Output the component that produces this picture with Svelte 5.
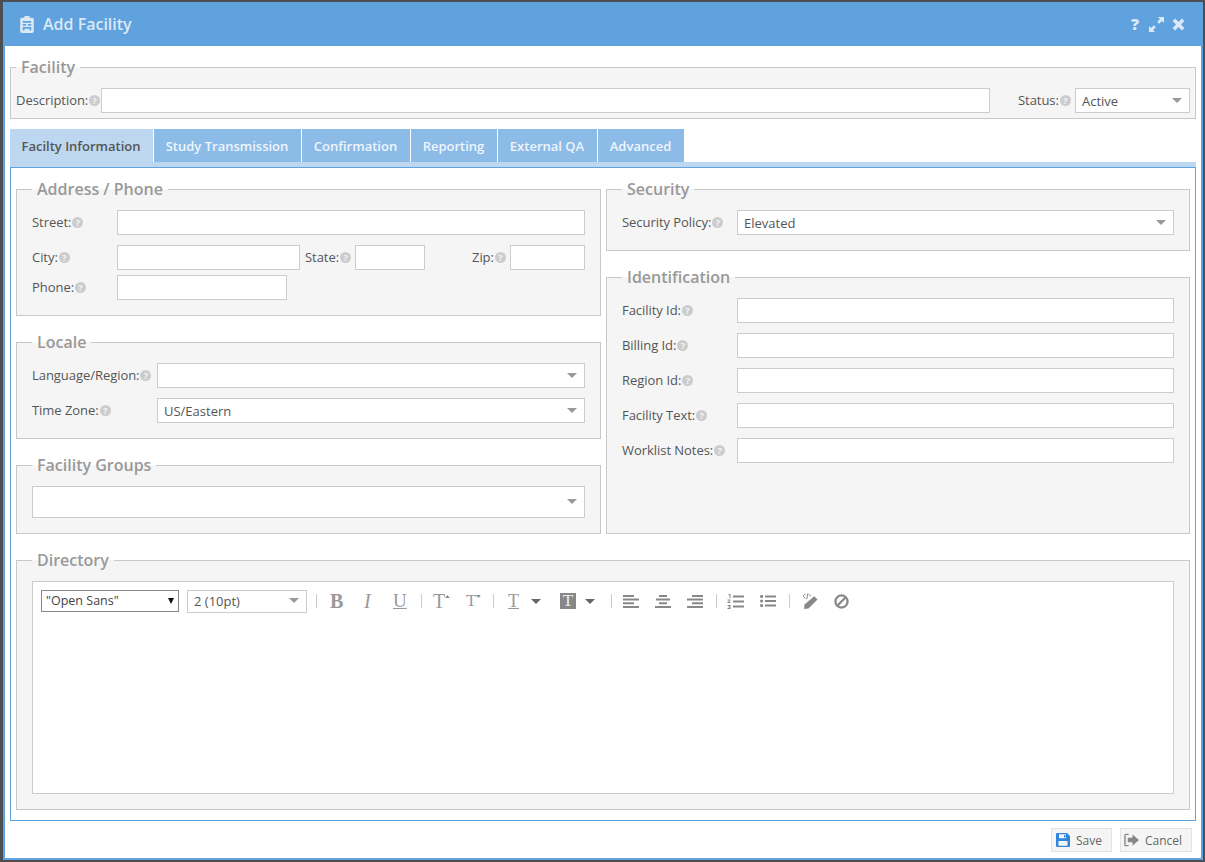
<script>
  const tabs = [
    { name: 'Facilty Information', width: 144 },
    { name: 'Study Transmission', width: 148 },
    { name: 'Confirmation', width: 109 },
    { name: 'Reporting', width: 87 },
    { name: 'External QA', width: 100 },
    { name: 'Advanced', width: 87 }
  ];
  const idFields = ['Facility Id', 'Billing Id', 'Region Id', 'Facility Text', 'Worklist Notes'];
</script>

{#snippet label(text, width, cls = '')}
  <span class="label {cls}" style="width: {width}px">{text}:<i class="help">?</i></span>
{/snippet}

{#snippet combo(text, cls)}
  <div class="combo {cls}"><span>{text}</span></div>
{/snippet}

<div class="win">
  <header class="title">
    <svg class="t-icon" viewBox="0 0 16 20" width="14" height="17">
      <path fill="#dbe9f7" fill-rule="evenodd" d="M5 0h6v2h3a2 2 0 0 1 2 2v14a2 2 0 0 1-2 2H2a2 2 0 0 1-2-2V4a2 2 0 0 1 2-2h3zM3 6v2h10V6zm0 3.500v2h4v-2zm6 0v2h4v-2zM3 13v4h2v-2h6v2h2v-4z"/>
    </svg>
    <h1>Add Facility</h1>
    <div class="t-actions">
      <span class="q">?</span>
      <svg viewBox="0 0 16 16" width="15" height="15"><path fill="#dbe9f7" d="M9.500 0H16v6.500l-2.200-2.200-3 3-2.100-2.100 3-3zM0 16V9.500l2.200 2.200 3-3 2.100 2.100-3 3L6.500 16z"/></svg>
      <svg viewBox="0 0 14 14" width="13" height="13"><path stroke="#dbe9f7" stroke-width="3.800" d="M2 2l10 10M12 2 2 12"/></svg>
    </div>
  </header>

  <div class="body">
    <fieldset class="facility">
      <legend>Facility</legend>
      <div class="row">
        {@render label('Description', 85)}
        <input class="grow" />
        {@render label('Status', 57, 'ml28')}
        {@render combo('Active', 'w115')}
      </div>
    </fieldset>

    <nav class="tabs">
      {#each tabs as t, i}
        <button class:active={i === 0} style="width: {t.width}px">{t.name}</button>
      {/each}
    </nav>
    <div class="strip"></div>

    <section class="panel">
      <div class="cols">
        <div class="col">
          <fieldset class="address">
            <legend>Address / Phone</legend>
            <div class="row mb10">
              {@render label('Street', 85)}
              <input class="grow" />
            </div>
            <div class="row mb5">
              {@render label('City', 85)}
              <input class="w183" />
              {@render label('State', 50, 'ml5')}
              <input class="w70" />
              {@render label('Zip', 38, 'ml47')}
              <input class="w75" />
            </div>
            <div class="row">
              {@render label('Phone', 85)}
              <input class="w170" />
            </div>
          </fieldset>

          <fieldset class="locale">
            <legend>Locale</legend>
            <div class="row mb10">
              {@render label('Language/Region', 125)}
              {@render combo('', 'grow')}
            </div>
            <div class="row">
              {@render label('Time Zone', 125)}
              {@render combo('US/Eastern', 'grow')}
            </div>
          </fieldset>

          <fieldset class="groups">
            <legend>Facility Groups</legend>
            {@render combo('', 'tall')}
          </fieldset>
        </div>

        <div class="col">
          <fieldset class="security">
            <legend>Security</legend>
            <div class="row">
              {@render label('Security Policy', 115)}
              {@render combo('Elevated', 'grow')}
            </div>
          </fieldset>

          <fieldset class="ident">
            <legend>Identification</legend>
            {#each idFields as f}
              <div class="row mb10">
                {@render label(f, 115)}
                <input class="grow" />
              </div>
            {/each}
          </fieldset>
        </div>
      </div>

      <fieldset class="directory">
        <legend>Directory</legend>
        <div class="editor">
          <div class="toolbar">
            <div class="native">"Open Sans"</div>
            {@render combo('2 (10pt)', 'w120')}
            <b class="sep" style="margin-left: 9px"></b>
            <span class="g b">B</span>
            <span class="g it">I</span>
            <span class="g un">U</span>
            <b class="sep" style="margin-left: 14px"></b>
            <span class="g t1">T<svg viewBox="0 0 6 4" width="5" height="3"><path fill="#888" d="M3 0l3 4H0z"/></svg></span>
            <span class="g t2">T<svg viewBox="0 0 6 4" width="5" height="3"><path fill="#888" d="M0 0h6L3 4z"/></svg></span>
            <b class="sep" style="margin-left: 13px"></b>
            <span class="g tu">T</span>
            <i class="caret"></i>
            <span class="g filled">T</span>
            <i class="caret c2"></i>
            <b class="sep" style="margin-left: 16px"></b>
            <svg class="ic a1" viewBox="0 0 16 13" width="16" height="13"><path fill="#888" d="M0 0h11v2H0zM0 3.600h16v2H0zM0 7.200h11v2H0zM0 11h16v2H0z"/></svg>
            <svg class="ic a2" viewBox="0 0 16 13" width="16" height="13"><path fill="#888" d="M4 0h8v2H4zM4 7.200h8v2H4zM1 3.600h14v2H1zM0 11h16v2H0z"/></svg>
            <svg class="ic a2" viewBox="0 0 16 13" width="16" height="13"><path fill="#888" d="M5 0h11v2H5zM0 3.600h16v2H0zM5 7.200h11v2H5zM0 11h16v2H0z"/></svg>
            <b class="sep" style="margin-left: 13px"></b>
            <svg class="ic l1" viewBox="0 0 17 15" width="17" height="15"><path fill="#888" d="M6 1.500h11v2H6zM6 6.500h11v2H6zM6 11.500h11v2H6zM1.500 0h2v4h-1V1h-1zM0.500 5.500h3v1l-2 1.500h2v1h-3V8l2-1.500h-2zM0.500 11h3v4h-3v-1h2v-.5h-1v-1h1V12h-2z"/></svg>
            <svg class="ic a2" viewBox="0 0 16 12" width="16" height="12"><path fill="#888" d="M5 0.500h11v2H5zM5 5h11v2H5zM5 9.500h11v2H5z"/><circle fill="#888" cx="1.600" cy="1.500" r="1.600"/><circle fill="#888" cx="1.600" cy="6" r="1.600"/><circle fill="#888" cx="1.600" cy="10.500" r="1.600"/></svg>
            <b class="sep" style="margin-left: 13px"></b>
            <svg class="ic pen" viewBox="0 0 16 16" width="16" height="16"><path fill="#888" d="M12.200 3.300l3.300 3.300L6.500 15.500 2 16l.500-4.500z"/><path fill="none" stroke="#888" d="M3.500 1 1 3.200l2.500 2.300M5.800 0.500 4.800 6M6.500 1 9 3.300"/></svg>
            <svg class="ic ban" viewBox="0 0 16 16" width="15" height="15"><circle cx="8" cy="8" r="6.500" fill="none" stroke="#888" stroke-width="2.400"/><path stroke="#888" stroke-width="2.400" d="M3.500 12.500l9-9"/></svg>
          </div>
        </div>
      </fieldset>
    </section>

    <footer class="actions">
      <button class="save">
        <svg viewBox="0 0 14 14" width="14" height="14"><path fill="#2f86dc" fill-rule="evenodd" d="M1 0h10l3 3v10a1 1 0 0 1-1 1H1a1 1 0 0 1-1-1V1a1 1 0 0 1 1-1zm2 1.300v4h7v-4zm5 .7h1.500v2.600H8zM2.500 8v4.700h9V8z"/></svg>
        Save
      </button>
      <button class="cancel">
        <svg viewBox="0 0 16 14" width="15" height="14"><path fill="#888" d="M9 1l7 6-7 6V9.500H4v-5h5z"/><path fill="none" stroke="#888" stroke-width="1.500" d="M5 1H2a1 1 0 0 0-1 1v10a1 1 0 0 0 1 1h3"/></svg>
        Cancel
      </button>
    </footer>
  </div>
</div>

<style>
  :global(body) {
    margin: 0;
    background: #4b4f54;
    font-family: "Open Sans", sans-serif;
  }
  .win {
    box-sizing: border-box;
    width: 1200px;
    height: 858px;
    margin: 2px 0 0 3px;
    border: 2px solid #5fa2dd;
    border-top: 0;
    background: #fff;
    display: flex;
    flex-direction: column;
  }
  .title {
    height: 44px;
    flex: none;
    margin: 0 -2px;
    background: #5fa2dd;
    display: flex;
    align-items: center;
    padding: 0 18px 0 17px;
    color: #dbe9f7;
  }
  .t-icon { margin-right: 9px; }
  h1 {
    margin: 0;
    font-size: 16px;
    font-weight: 600;
  }
  .t-actions {
    margin-left: auto;
    display: flex;
    align-items: center;
    gap: 8px;
  }
  .q { font-size: 16px; font-weight: 800; width: 10px; }
  .body {
    flex: 1;
    padding: 13px 5px 0;
    display: flex;
    flex-direction: column;
    min-height: 0;
  }
  fieldset {
    margin: 0;
    padding: 11px 15px 0;
    border: 1px solid #c8c8c8;
    background: #f5f5f5;
    min-width: 0;
    box-sizing: border-box;
  }
  legend {
    padding: 0 5px;
    color: #999;
    font-size: 16px;
    font-weight: 600;
    line-height: 20px;
  }
  .row { display: flex; align-items: center; }
  .mb10 { margin-bottom: 10px; }
  .mb5 { margin-bottom: 5px; }
  .ml5 { margin-left: 5px; }
  .ml28 { margin-left: 28px; }
  .ml47 { margin-left: 47px; }
  .label {
    flex: none;
    color: #555;
    font-size: 13px;
    letter-spacing: -0.05px;
    white-space: nowrap;
    margin-bottom: 2px;
  }
  .help {
    display: inline-block;
    overflow: hidden;
    width: 11px;
    height: 11px;
    margin-left: 1px;
    border-radius: 50%;
    background: #ccc;
    color: #f5f5f5;
    font: 700 9px/11px "Open Sans", sans-serif;
    letter-spacing: 0;
    text-align: center;
    vertical-align: -1px;
  }
  input, .combo {
    box-sizing: border-box;
    height: 25px;
    border: 1px solid #ccc;
    background: #fff;
    margin: 0;
    padding: 0 6px;
    outline: 0;
    min-width: 0;
  }
  .grow { flex: 1; }
  .w70 { width: 70px; }
  .w75 { width: 75px; }
  .w115 { width: 115px; }
  .w120 { width: 120px; }
  .w170 { width: 170px; }
  .w183 { width: 183px; }
  .combo {
    position: relative;
    display: flex;
    align-items: center;
    font-size: 13px;
    color: #555;
  }
  .combo::after {
    content: "";
    position: absolute;
    right: 7px;
    top: 50%;
    margin-top: -3px;
    border: 5px solid transparent;
    border-top: 5px solid #999;
    border-bottom: 0;
  }
  .tall { height: 32px; }

  .facility {
    height: 62px;
    margin-top: -2px;
    padding: 11px 5px 0;
  }

  .tabs {
    display: flex;
    margin-top: 10px;
  }
  .tabs button {
    height: 33px;
    padding: 0 1px 0 0;
    border: 0;
    border-right: 1px solid #fff;
    background: #8dbbe8;
    color: #eef5fc;
    font: 600 13px "Open Sans", sans-serif;
  }
  .tabs button.active {
    background: #bdd7f0;
    color: #555;
  }
  .strip {
    flex: none;
    height: 5px;
    background: #bdd7f0;
  }
  .panel {
    box-sizing: border-box;
    flex: none;
    height: 654px;
    border: 1px solid #5fa2dd;
    padding: 11px 5px 0;
  }
  .cols {
    display: grid;
    grid-template-columns: 585px 584px;
    gap: 5px;
  }
  .col { display: flex; flex-direction: column; }
  .address { height: 137px; margin-bottom: 16px; }
  .locale { height: 107px; margin-bottom: 16px; }
  .groups { height: 79px; }
  .security { height: 72px; margin-bottom: 16px; }
  .ident { height: 267px; }
  .directory { height: 260px; margin-top: 16px; }
  .editor {
    box-sizing: border-box;
    height: 213px;
    background: #fff;
    border: 1px solid #ccc;
    padding: 8px;
  }
  .toolbar {
    display: flex;
    align-items: center;
    height: 22px;
    color: #888;
  }
  .native {
    box-sizing: border-box;
    width: 138px;
    height: 22px;
    flex: none;
    border: 1px solid #888;
    padding: 0 4px;
    font-size: 12.500px;
    line-height: 20px;
    color: #444;
    position: relative;
    margin-right: 8px;
  }
  .native::after {
    content: "";
    position: absolute;
    right: 4px;
    top: 7px;
    border: 3.500px solid transparent;
    border-top: 6px solid #111;
    border-bottom: 0;
  }
  .toolbar .combo { height: 23px; flex: none; }
  .sep {
    width: 1px;
    height: 14px;
    background: #ccc;
    flex: none;
  }
  .g {
    flex: none;
    font-family: "Liberation Serif", serif;
    font-size: 20px;
    line-height: 22px;
    color: #999;
    position: relative;
  }
  .b { font-weight: 700; width: 14px; margin-left: 13px; }
  .it { font-style: italic; width: 9px; margin-left: 20px; }
  .un { text-decoration: underline; width: 14px; margin-left: 20px; font-size: 19px; }
  .t1, .t2 { display: flex; align-items: flex-start; }
  .t1 { width: 16px; margin-left: 11px; }
  .t2 { width: 14px; margin-left: 17px; font-size: 17px; }
  .t1 svg, .t2 svg { margin-top: 5px; flex: none; }
  .tu {
    width: 13px;
    margin-left: 14px;
    text-decoration: underline;
    font-size: 18px;
  }
  .caret {
    flex: none;
    width: 0;
    height: 0;
    border: 5px solid transparent;
    border-top: 5px solid #666;
    border-bottom: 0;
    margin-left: 10px;
  }
  .c2 { margin-left: 9px; }
  .filled {
    background: #888;
    color: #eee;
    width: 16px;
    height: 16px;
    line-height: 16px;
    text-align: center;
    font-size: 17px;
    margin-left: 19px;
  }
  .ic { flex: none; }
  .a1 { margin-left: 11px; }
  .a2 { margin-left: 16px; }
  .l1 { margin-left: 10px; }
  .pen { margin-left: 12px; }
  .ban { margin-left: 16px; }
  .actions {
    flex: 1;
    display: flex;
    justify-content: flex-end;
    align-items: center;
    gap: 8px;
    padding: 1px 4px 0 0;
  }
  .actions button {
    box-sizing: border-box;
    height: 24px;
    display: flex;
    align-items: center;
    gap: 6px;
    padding: 0 0 0 4px;
    background: #f5f5f5;
    border: 1px solid #e3e3e3;
    color: #666;
    font: 12px "Open Sans", sans-serif;
  }
  .actions .save { width: 61px; }
  .actions .cancel { width: 72px; padding-left: 3px; }
</style>
